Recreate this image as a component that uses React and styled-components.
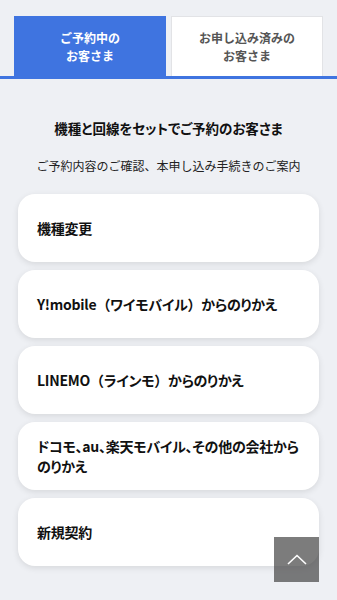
import React from "react";
import styled, { createGlobalStyle } from "styled-components";

const GlobalStyle = createGlobalStyle`
  html, body {
    margin: 0;
    padding: 0;
    background: #eef0f4;
  }
  html::-webkit-scrollbar {
    display: none;
  }
  body {
    font-family: "Noto Sans CJK JP", "Noto Sans", sans-serif;
    color: #111;
  }
`;

const items = [
  "機種変更",
  "Y!mobile（ワイモバイル）からのりかえ",
  "LINEMO（ラインモ）からのりかえ",
  "ドコモ、au、楽天モバイル、その他の会社から\nのりかえ",
  "新規契約",
];

// full-width brackets keep their natural width, the rest is set proportionally
function renderLabel(text) {
  return text.split(/([（）])/).map((part, i) =>
    part === "（" || part === "）" ? <Bracket key={i}>{part}</Bracket> : part
  );
}

export default function App() {
  return (
    <Page>
      <GlobalStyle />
      <Tabs>
        <Tab $active>
          ご予約中の
          <br />
          お客さま
        </Tab>
        <Tab>
          お申し込み済みの
          <br />
          お客さま
        </Tab>
      </Tabs>
      <Heading>機種と回線をセットでご予約のお客さま</Heading>
      <Lead>ご予約内容のご確認、本申し込み手続きのご案内</Lead>
      <Cards>
        {items.map((label) => (
          <Card key={label} href="#">
            <Label>{renderLabel(label)}</Label>
          </Card>
        ))}
      </Cards>
      <TopButton aria-label="ページトップへ">
        <svg width="20" height="11" viewBox="0 0 20 11" fill="none">
          <path d="M1 10L10 1.5L19 10" stroke="#fff" strokeWidth="1.6" />
        </svg>
      </TopButton>
    </Page>
  );
}

const Page = styled.div`
  min-height: 100vh;
  padding-bottom: 60px;
  background: #eef0f4;
`;

const Tabs = styled.div`
  display: flex;
  gap: 5px;
  padding: 16px 14px 0;
  border-bottom: 3px solid #3f74e0;
`;

const Tab = styled.div`
  flex: 1;
  height: 60px;
  box-sizing: border-box;
  display: flex;
  align-items: center;
  justify-content: center;
  text-align: center;
  font-size: 12px;
  line-height: 18px;
  font-weight: 700;
  color: ${(p) => (p.$active ? "#fff" : "#555")};
  background: ${(p) => (p.$active ? "#3f74e0" : "#fff")};
  border: 1px solid ${(p) => (p.$active ? "#3f74e0" : "#e2e3e6")};
  border-bottom: none;
`;

const Heading = styled.h2`
  margin: 39px 0 0;
  font-size: 13.5px;
  line-height: 20px;
  font-weight: 700;
  text-align: center;
  font-feature-settings: "palt";
`;

const Lead = styled.p`
  margin: 19px 0 0;
  font-size: 12px;
  line-height: 18px;
  text-align: center;
  color: #222;
`;

const Cards = styled.div`
  display: flex;
  flex-direction: column;
  gap: 8px;
  margin: 19px 18px 0;
`;

const Card = styled.a`
  display: flex;
  align-items: center;
  height: 68px;
  box-sizing: border-box;
  padding: 0 4px 0 19px;
  background: #fff;
  border-radius: 17px;
  box-shadow: 0 2px 6px rgba(0, 0, 0, 0.1);
  color: #111;
  text-decoration: none;
`;

const Label = styled.span`
  font-size: 14px;
  line-height: 20px;
  font-weight: 700;
  letter-spacing: -0.25px;
  white-space: pre-line;
  font-feature-settings: "palt";
`;

const Bracket = styled.span`
  font-feature-settings: normal;
`;

const TopButton = styled.button`
  position: fixed;
  right: 18px;
  bottom: 18px;
  width: 45px;
  height: 45px;
  padding: 0;
  border: none;
  display: flex;
  align-items: center;
  justify-content: center;
  background: rgba(68, 68, 68, 0.7);
  cursor: pointer;
`;
